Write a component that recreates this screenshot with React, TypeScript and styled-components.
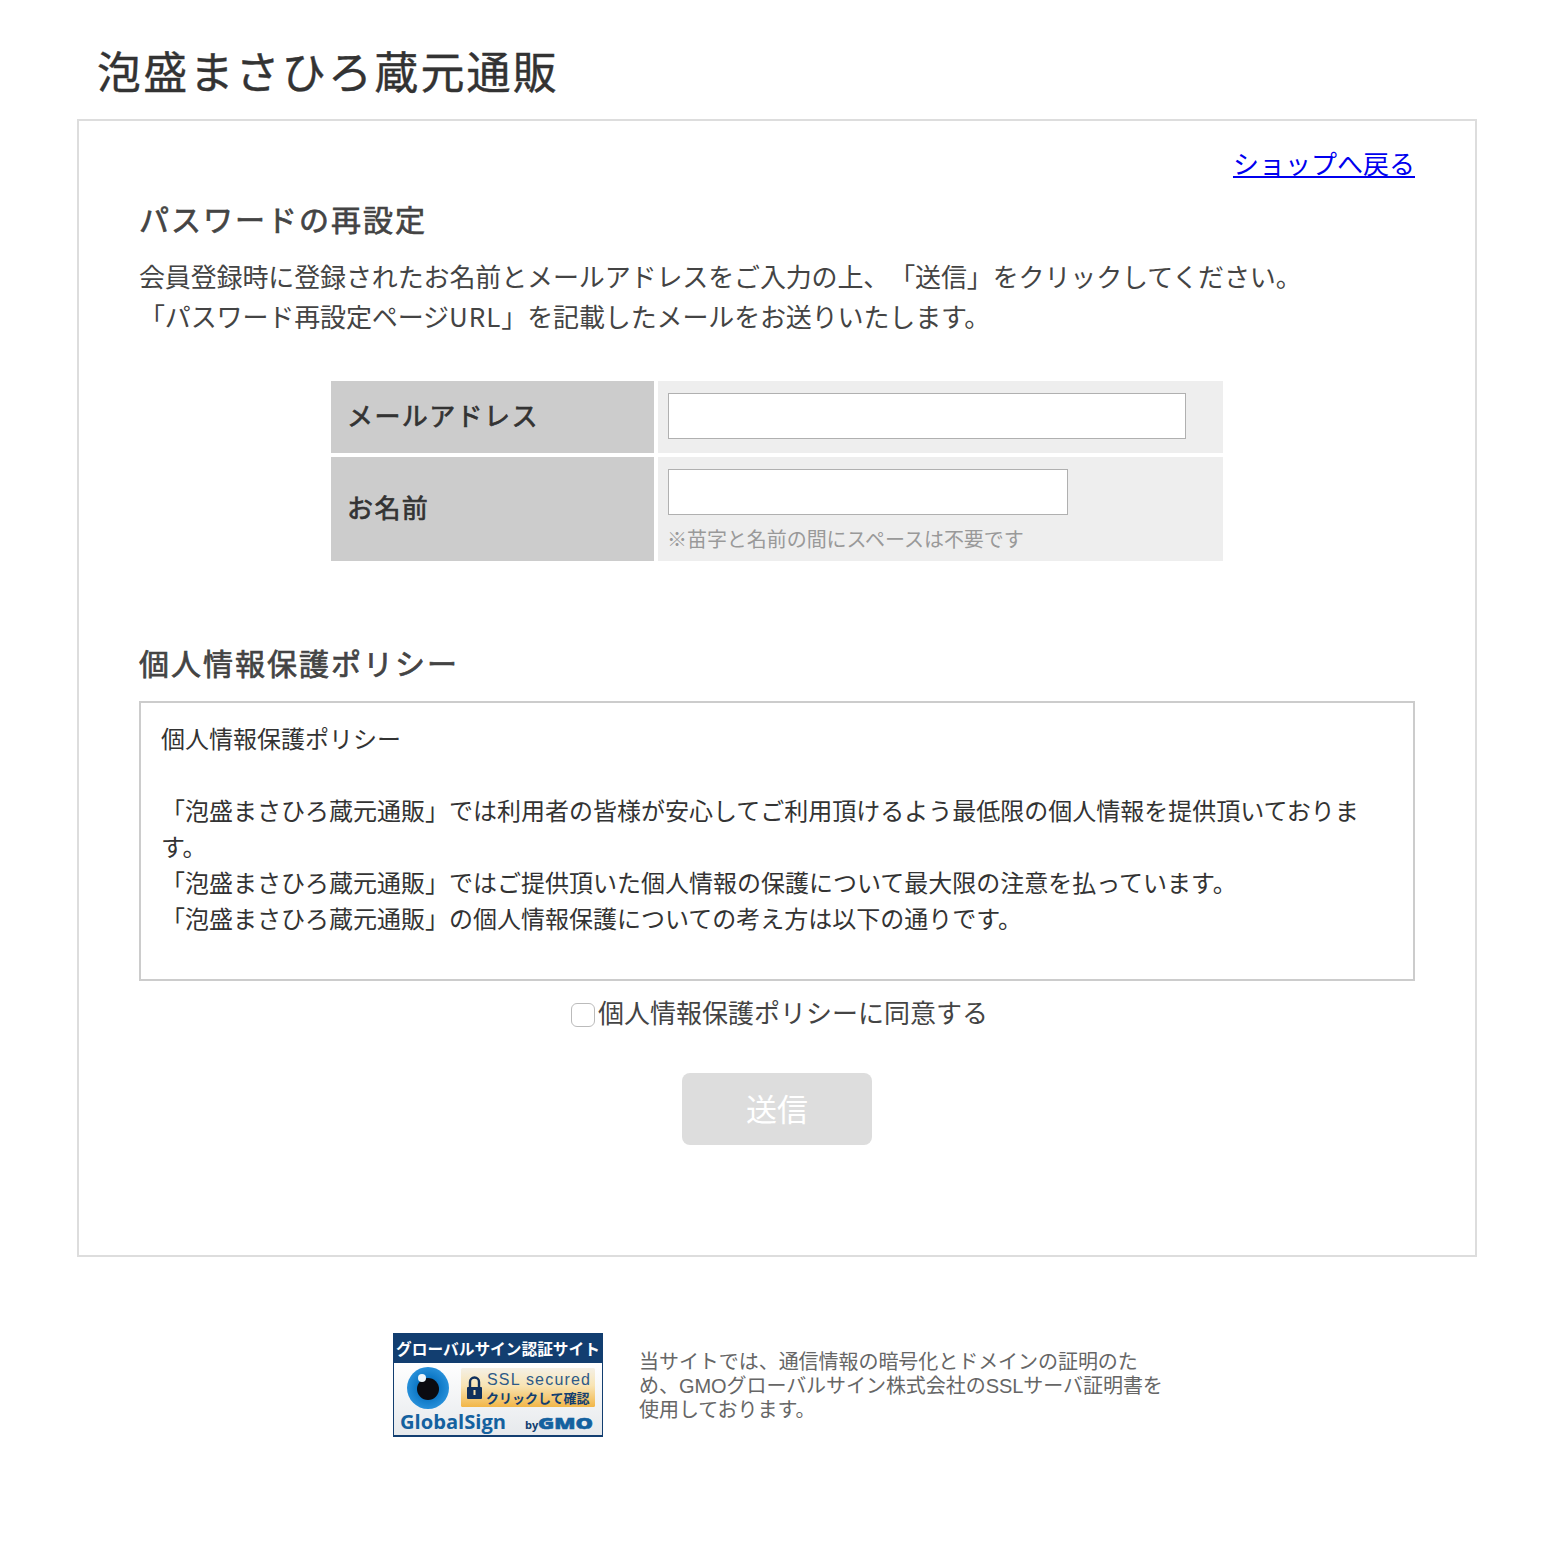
import React from 'react'
import styled, { createGlobalStyle } from 'styled-components'

const GlobalStyle = createGlobalStyle`
  html, body {
    margin: 0;
    padding: 0;
    background: #fff;
  }
  body {
    font-family: "Noto Sans CJK JP", "Liberation Sans", sans-serif;
    color: #333;
    text-spacing-trim: space-all;
  }
`

const Page = styled.div`
  width: 1400px;
  margin: 0 0 0 77px;
  padding: 0 0 97px;
`

const ShopTitle = styled.h1`
  margin: 0;
  padding: 40px 0 0 20px;
  box-sizing: border-box;
  height: 119px;
  font-size: 44px;
  line-height: 60px;
  font-weight: 400;
  letter-spacing: 2.200px;
  color: #333;
  -webkit-text-stroke: 0.400px #333;
`

const Card = styled.main`
  box-sizing: border-box;
  height: 1138px;
  border: 2px solid #ddd;
  padding: 24px 60px 0;
`

const BackRow = styled.div`
  text-align: right;
  font-size: 26px;
  line-height: 36px;
`

const BackLink = styled.a`
  color: #0000ee;
  text-decoration: underline;
`

const SectionTitle = styled.h2`
  margin: 15px 0 0;
  font-size: 30px;
  line-height: 44px;
  font-weight: 400;
  letter-spacing: 2px;
  color: #444;
  -webkit-text-stroke: 0.700px #444;
`

const Lead = styled.p`
  margin: 16px 0 0;
  font-size: 26px;
  line-height: 40px;
  letter-spacing: -0.130px;
  color: #444;
`

const Latin = styled.span`
  letter-spacing: 1px;
`

const FormTable = styled.div`
  width: 892px;
  margin: 45px auto 0;
  display: grid;
  grid-template-columns: 323px 565px;
  gap: 4px;
`

const Label = styled.div`
  display: flex;
  align-items: center;
  background: #ccc;
  padding: 0 0 5px 16px;
  font-size: 26px;
  font-weight: 400;
  letter-spacing: 1.400px;
  color: #333;
  -webkit-text-stroke: 0.700px #333;
`

const FieldCell = styled.div`
  box-sizing: border-box;
  background: #eee;
  padding: 12px 10px 0;
  min-height: 72px;
`

const TextField = styled.input<{ $w: number }>`
  display: block;
  box-sizing: border-box;
  width: ${(p) => p.$w}px;
  height: 46px;
  border: 1px solid #b0b0b0;
  background: #fff;
  padding: 0 8px;
`

const Hint = styled.div`
  margin: 9px 0 0 -1px;
  padding-bottom: 7px;
  font-size: 20px;
  line-height: 30px;
  letter-spacing: -0.050px;
  color: #999;
`

const PolicyHeading = styled(SectionTitle)`
  margin-top: 79px;
`

const PolicyBox = styled.div`
  box-sizing: border-box;
  height: 280px;
  margin-top: 17px;
  border: 2px solid #ccc;
  padding: 17px 20px 0;
  font-size: 24px;
  line-height: 36px;
  color: #333;
`

const AgreeRow = styled.label`
  display: flex;
  justify-content: center;
  align-items: center;
  margin-top: 12px;
  padding-left: 5px;
  font-size: 26px;
  line-height: 38px;
  color: #444;
`

const AgreeBox = styled.input`
  appearance: none;
  box-sizing: border-box;
  width: 24px;
  height: 24px;
  margin: 6px 3px 0 0;
  border: 1px solid #bbb;
  border-radius: 6px;
  background: #fff;
`

const SendButton = styled.button`
  display: block;
  width: 190px;
  height: 72px;
  margin: 42px auto 0;
  padding: 0 0 4px;
  border: 0;
  border-radius: 8px;
  background: #ddd;
  color: #fff;
  font: inherit;
  font-size: 31px;
`

const Footer = styled.footer`
  display: flex;
  align-items: center;
  gap: 36px;
  margin: 76px 0 0 316px;
`

const SealText = styled.p`
  width: 530px;
  margin: 2px 0 0;
  font-family: "Liberation Sans", "Noto Sans CJK JP", sans-serif;
  font-size: 20px;
  line-height: 24px;
  letter-spacing: -0.050px;
  color: #666;
`

const Seal = () => (
  <svg width="210" height="104" viewBox="0 0 210 104" style={{ flex: 'none', display: 'block' }}>
    <defs>
      <linearGradient id="bg" x1="0" y1="0" x2="0" y2="1">
        <stop offset="0" stopColor="#fff" />
        <stop offset="1" stopColor="#e6e9ec" />
      </linearGradient>
      <linearGradient id="gold" x1="0" y1="0" x2="0" y2="1">
        <stop offset="0" stopColor="#f4f0e6" />
        <stop offset="0.45" stopColor="#f8e4b4" />
        <stop offset="1" stopColor="#f2b648" />
      </linearGradient>
      <radialGradient id="iris" cx="0.5" cy="0.5" r="0.5">
        <stop offset="0.5" stopColor="#0c76c4" />
        <stop offset="1" stopColor="#2790da" />
      </radialGradient>
    </defs>
    <rect width="210" height="104" fill="#123e70" />
    <rect x="1" y="30" width="208" height="72" fill="url(#bg)" />
    <text x="105" y="22" textAnchor="middle" fontSize="15.700" fontWeight="700" fill="#fff">
      グローバルサイン認証サイト
    </text>
    <circle cx="35" cy="55" r="21" fill="url(#iris)" />
    <circle cx="35" cy="56" r="11" fill="#0b0b10" />
    <circle cx="29" cy="45" r="4" fill="#eef6fb" />
    <rect x="68" y="35" width="134" height="39" rx="1.500" fill="url(#gold)" />
    <path d="M77 54v-5a4.500 4.500 0 0 1 9 0v5" fill="none" stroke="#10305c" strokeWidth="2.400" />
    <rect x="74" y="54" width="15" height="12" rx="1" fill="#10305c" />
    <rect x="80.500" y="57" width="2" height="5" fill="#f8e2ae" />
    <text x="94" y="52" fontSize="16" fill="#2d5a88" letterSpacing="1.200" fontFamily="Liberation Sans, sans-serif">
      SSL secured
    </text>
    <text x="93" y="70" fontSize="13" fontWeight="700" fill="#123e70">
      クリックして確認
    </text>
    <text x="7" y="96" fontSize="20" fontWeight="700" fill="#14619f" fontFamily="Open Sans, sans-serif" textLength="106" lengthAdjust="spacingAndGlyphs">
      GlobalSign
    </text>
    <text x="132" y="96" fontSize="11" fontWeight="700" fill="#123e70" fontFamily="Open Sans, sans-serif">
      by
    </text>
    <text x="145" y="96" fontSize="15" fontWeight="800" fill="#14619f" stroke="#14619f" strokeWidth="0.500" fontFamily="Open Sans, sans-serif" textLength="55" lengthAdjust="spacingAndGlyphs">
      GMO
    </text>
  </svg>
)

const App: React.FC = () => {
  return (
    <>
      <GlobalStyle />
      <Page>
        <ShopTitle>泡盛まさひろ蔵元通販</ShopTitle>
        <Card>
          <BackRow>
            <BackLink href="#">ショップへ戻る</BackLink>
          </BackRow>
          <SectionTitle>パスワードの再設定</SectionTitle>
          <Lead>
            会員登録時に登録されたお名前とメールアドレスをご入力の上、「送信」をクリックしてください。
            <br />
            「パスワード再設定ページ<Latin>URL</Latin>」を記載したメールをお送りいたします。
          </Lead>
          <FormTable>
            <Label>メールアドレス</Label>
            <FieldCell>
              <TextField $w={518} type="email" />
            </FieldCell>
            <Label>お名前</Label>
            <FieldCell>
              <TextField $w={400} type="text" />
              <Hint>※苗字と名前の間にスペースは不要です</Hint>
            </FieldCell>
          </FormTable>
          <PolicyHeading>個人情報保護ポリシー</PolicyHeading>
          <PolicyBox>
            個人情報保護ポリシー
            <br />
            <br />
            「泡盛まさひろ蔵元通販」では利用者の皆様が安心してご利用頂けるよう最低限の個人情報を提供頂いております。
            <br />
            「泡盛まさひろ蔵元通販」ではご提供頂いた個人情報の保護について最大限の注意を払っています。
            <br />
            「泡盛まさひろ蔵元通販」の個人情報保護についての考え方は以下の通りです。
          </PolicyBox>
          <AgreeRow>
            <AgreeBox type="checkbox" />
            個人情報保護ポリシーに同意する
          </AgreeRow>
          <SendButton type="button">送信</SendButton>
        </Card>
        <Footer>
          <Seal />
          <SealText>
            当サイトでは、通信情報の暗号化とドメインの証明のため、GMOグローバルサイン株式会社のSSLサーバ証明書を使用しております。
          </SealText>
        </Footer>
      </Page>
    </>
  )
}

export default App
